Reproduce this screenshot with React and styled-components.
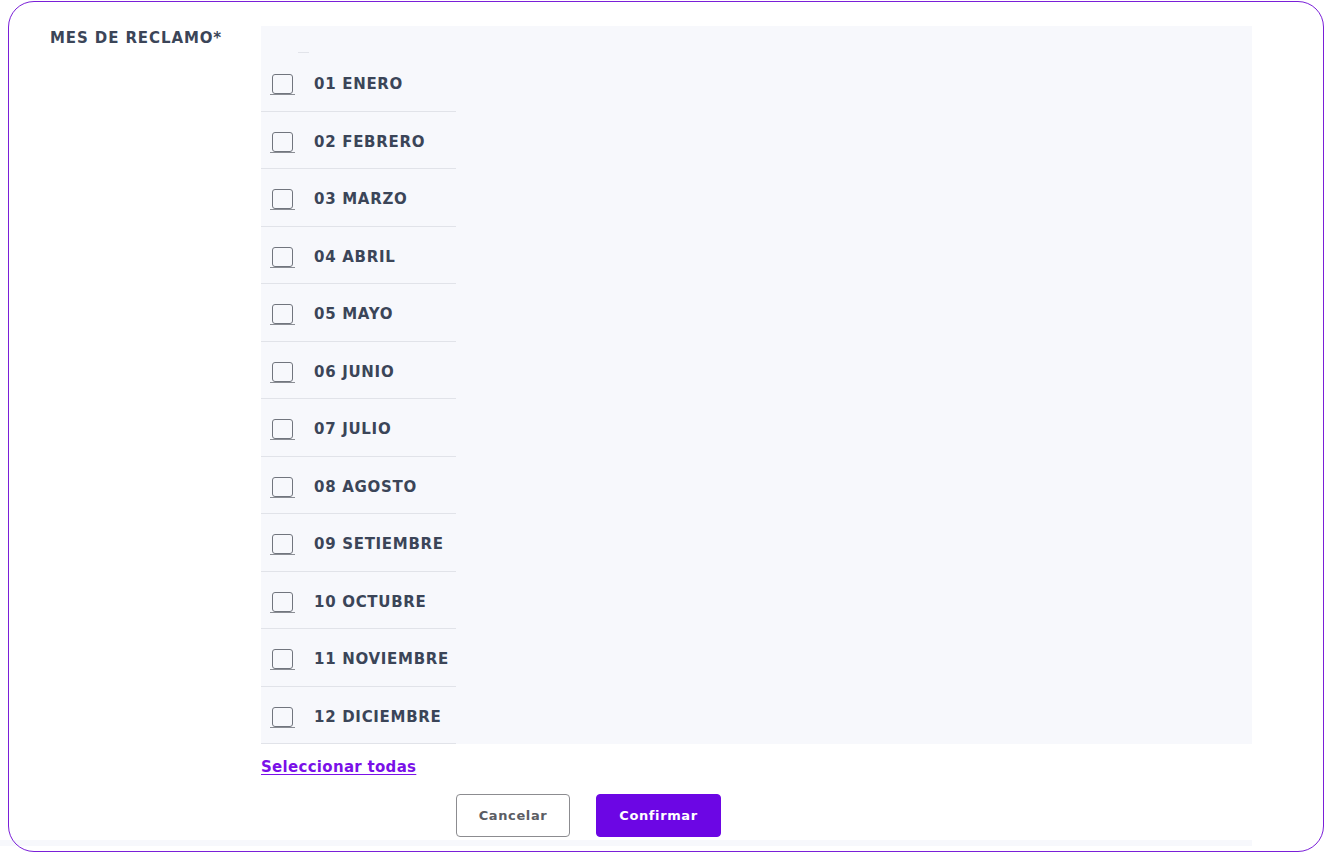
import React from "react";
import styled, { createGlobalStyle } from "styled-components";

const Global = createGlobalStyle`
  html, body { margin: 0; padding: 0; background: #ffffff; }
  body { font-family: "DejaVu Sans", "Open Sans", Arial, sans-serif; }
  * { box-sizing: border-box; }
`;

const Page = styled.div`
  position: relative;
  width: 1328px;
  height: 861px;
  padding: 1px 0 0 8px;
  &::before {
    content: "";
    position: absolute;
    left: 0;
    top: 840px;
    width: 1252px;
    height: 6px;
    background: #f7f8fc;
  }
`;

const Card = styled.div`
  position: relative;
  width: 1316px;
  height: 851px;
  border: 1px solid #7a1fd8;
  border-radius: 26px;
  display: grid;
  grid-template-columns: 252px 1fr;
  padding: 24px 0 0 0;
`;

const Label = styled.div`
  padding: 3px 0 0 41px;
  font-size: 15px;
  font-weight: 700;
  color: #3b4558;
  letter-spacing: 0.9px;
`;

const Content = styled.div`
  display: flex;
  flex-direction: column;
`;

const Panel = styled.div`
  width: 991px;
  height: 718px;
  background: #f7f8fc;
  padding-top: 26px;
  display: flex;
  flex-direction: column;
`;

const Dash = styled.div`
  width: 11px;
  height: 1px;
  margin-left: 37px;
  background: #e2e4ea;
  margin-bottom: 1px;
`;

const Row = styled.label`
  width: 195px;
  height: 57.5px;
  display: flex;
  align-items: center;
  gap: 21px;
  padding: 4px 0 0 11px;
  border-bottom: 1.5px solid #e1e3e9;
  flex-shrink: 0;
`;

const Box = styled.span`
  position: relative;
  width: 21px;
  height: 20px;
  border: 1.5px solid #71757e;
  border-radius: 3px;
  background: #f7f8fc;
  &::after {
    content: "";
    position: absolute;
    left: -3px;
    right: -3px;
    bottom: -2px;
    height: 1px;
    background: #8a8d94;
  }
`;

const MonthText = styled.span`
  font-size: 15px;
  font-weight: 700;
  color: #3b4558;
  letter-spacing: 0.7px;
  white-space: nowrap;
`;

const SelectAll = styled.a`
  margin-top: 14px;
  font-size: 15px;
  font-weight: 700;
  color: #7a10e8;
  letter-spacing: 0.3px;
  text-decoration: underline;
  text-underline-offset: 2px;
  cursor: pointer;
  align-self: flex-start;
`;

const Actions = styled.div`
  display: flex;
  gap: 26px;
  margin-top: 18px;
  padding-left: 195px;
`;

const Button = styled.button`
  height: 43px;
  width: ${(p) => (p.$primary ? "125px" : "114px")};
  border-radius: 4px;
  border: ${(p) => (p.$primary ? "1px solid #6c06e4" : "1.5px solid #8c8c90")};
  background: ${(p) => (p.$primary ? "#6c06e4" : "#ffffff")};
  color: ${(p) => (p.$primary ? "#ffffff" : "#5b5d64")};
  font-family: "DejaVu Sans", "Open Sans", Arial, sans-serif;
  font-size: 13px;
  font-weight: 700;
  letter-spacing: 0.6px;
  cursor: pointer;
`;

const months = [
  "01 ENERO",
  "02 FEBRERO",
  "03 MARZO",
  "04 ABRIL",
  "05 MAYO",
  "06 JUNIO",
  "07 JULIO",
  "08 AGOSTO",
  "09 SETIEMBRE",
  "10 OCTUBRE",
  "11 NOVIEMBRE",
  "12 DICIEMBRE",
];

export default function App() {
  return (
    <Page>
      <Global />
      <Card>
        <Label>MES DE RECLAMO*</Label>
        <Content>
          <Panel>
            <Dash />
            {months.map((m) => (
              <Row key={m}>
                <Box />
                <MonthText>{m}</MonthText>
              </Row>
            ))}
          </Panel>
          <SelectAll>Seleccionar todas</SelectAll>
          <Actions>
            <Button>Cancelar</Button>
            <Button $primary>Confirmar</Button>
          </Actions>
        </Content>
      </Card>
    </Page>
  );
}
